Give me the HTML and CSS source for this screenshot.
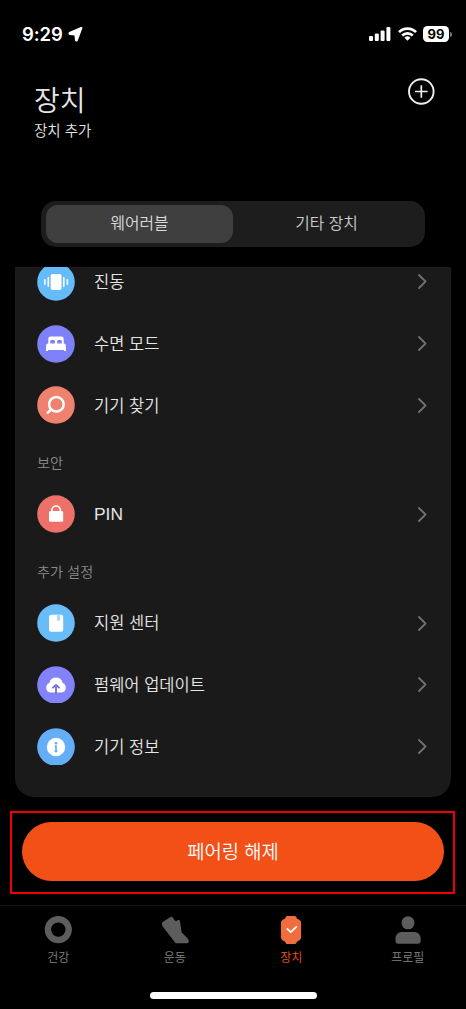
FILE: index.html
```html
<!DOCTYPE html>
<html lang="ko">
<head>
<meta charset="utf-8">
<title>장치</title>
<link rel="stylesheet" href="styles.css">
</head>
<body>
<div class="screen">
  <div class="status">
    <span class="time">9:29</span>
    <svg class="locate" width="15" height="16" viewBox="0 0 15 16"><path d="M13.200 1.600 1.500 6.800q-.7 1 .2 1.400l5.400.6.700 5.500q.5.900 1.200.1L13.700 2.100z" fill="#fff" stroke="#fff" stroke-width="1.500" stroke-linejoin="round"/></svg>
    <svg class="signal" width="22" height="14" viewBox="0 0 22 14" fill="#fff"><rect x="0" y="9" width="4" height="5" rx="1.1"/><rect x="5.8" y="6.5" width="4" height="7.5" rx="1.1"/><rect x="11.6" y="3.5" width="4" height="10.5" rx="1.1"/><rect x="17.4" y="0" width="4" height="14" rx="1.1"/></svg>
    <svg class="wifi" width="19" height="14" viewBox="0 0 19 14"><g fill="none" stroke="#fff" stroke-width="2.700"><path d="M1 5.100a12 12 0 0 1 17 0"/><path d="M4.200 8.500a7.600 7.600 0 0 1 10.600 0"/></g><path d="M6.500 10.800a4.300 4.300 0 0 1 6 0L9.500 13.700z" fill="#fff"/></svg>
    <span class="battery">99</span><span class="battery-tip"></span>
  </div>

  <header class="header">
    <div>
      <h1 class="title">장치</h1>
      <p class="subtitle">장치 추가</p>
    </div>
    <svg class="add" width="28" height="28" viewBox="0 0 28 28" fill="none" stroke="#eee" stroke-width="1.900"><circle cx="14.300" cy="13.500" r="12.300"/><path d="M14.300 7.200v12.600M8 13.500h12.600" stroke-width="1.700"/></svg>
  </header>

  <div class="tabs">
    <div class="tab tab-on">웨어러블</div>
    <div class="tab">기타 장치</div>
  </div>

  <main class="card">
    <div class="list">
      <div class="row">
        <svg class="icon" viewBox="0 0 38 38"><circle cx="19" cy="19" r="18.800" fill="#66bbfa"/><rect x="13.700" y="11" width="10.800" height="16" rx="1.800" fill="#fff"/><path d="M11.300 14.800v8.500M26.800 14.800v8.500M7.800 16.800v4.500M30.400 16.800v4.500" stroke="#fff" stroke-width="1.600" stroke-linecap="round"/></svg>
        <span class="name">진동</span><svg class="chev" viewBox="0 0 9 15"><path d="m1 1 6.500 6.500L1 14"/></svg>
      </div>
      <div class="row">
        <svg class="icon" viewBox="0 0 38 38"><circle cx="19" cy="19" r="18.800" fill="#7e80f7"/><path d="M11.300 18.500v-4.700a2.200 2.200 0 0 1 2.200-2.200h11a2.200 2.200 0 0 1 2.200 2.200v4.700a2.200 2.200 0 0 1 2.200 2.200V26h-2v-1H11v1H9v-5.300a2.200 2.200 0 0 1 2.300-2.200z" fill="#fff"/><path d="M13.300 18.400v-2c0-.9.6-1.400 1.400-1.400h1.800c.9 0 1.400.5 1.400 1.400v2zM20.200 18.400v-2c0-.9.6-1.400 1.400-1.400h1.800c.9 0 1.400.5 1.400 1.400v2z" fill="#7e80f7"/></svg>
        <span class="name">수면 모드</span><svg class="chev" viewBox="0 0 9 15"><path d="m1 1 6.500 6.500L1 14"/></svg>
      </div>
      <div class="row">
        <svg class="icon" viewBox="0 0 38 38"><circle cx="19" cy="19" r="18.800" fill="#ef826e"/><g fill="none" stroke="#fff" stroke-width="2.500" stroke-linecap="round"><circle cx="19.400" cy="18.300" r="7.300"/><path d="m14.200 23.500-3.600 3.200"/></g></svg>
        <span class="name">기기 찾기</span><svg class="chev" viewBox="0 0 9 15"><path d="m1 1 6.500 6.500L1 14"/></svg>
      </div>
      <h2 class="section">보안</h2>
      <div class="row">
        <svg class="icon" viewBox="0 0 38 38"><circle cx="19" cy="19" r="18.800" fill="#ed7168"/><rect x="12" y="16" width="14.200" height="10.800" rx="1.600" fill="#fff"/><path d="M14.900 17v-1.800a4.200 4.200 0 0 1 8.400 0V17" fill="none" stroke="#fff" stroke-width="1.700"/></svg>
        <span class="name latin">PIN</span><svg class="chev" viewBox="0 0 9 15"><path d="m1 1 6.500 6.500L1 14"/></svg>
      </div>
      <h2 class="section">추가 설정</h2>
      <div class="row">
        <svg class="icon" viewBox="0 0 38 38"><circle cx="19" cy="19" r="18.800" fill="#68bdf9"/><rect x="12" y="10.700" width="14.200" height="17" rx="2.200" fill="#fff"/><path d="M20 10.700h3.200v6.600l-1.600-1.100-1.600 1.100z" fill="#a9d9fb"/></svg>
        <span class="name">지원 센터</span><svg class="chev" viewBox="0 0 9 15"><path d="m1 1 6.500 6.500L1 14"/></svg>
      </div>
      <div class="row">
        <svg class="icon" viewBox="0 0 38 38"><path d="M13.500 37a18.800 18.800 0 1 1 11 0z" fill="#8283f8"/><path d="M13.300 26.500a4.900 4.900 0 0 1-.9-9.400 6.700 6.700 0 0 1 13.200 0 4.900 4.900 0 0 1-.9 9.400z" fill="#fff"/><path d="M19 27v-7M16 21.600l3-2.700 3 2.700" fill="none" stroke="#7475df" stroke-width="1.900" stroke-linecap="round" stroke-linejoin="round"/></svg>
        <span class="name">펌웨어 업데이트</span><svg class="chev" viewBox="0 0 9 15"><path d="m1 1 6.500 6.500L1 14"/></svg>
      </div>
      <div class="row">
        <svg class="icon" viewBox="0 0 38 38"><path d="M13.500 37a18.800 18.800 0 1 1 11 0z" fill="#64aef8"/><circle cx="19" cy="19" r="9.200" fill="#fff"/><circle cx="19" cy="15.300" r="1.300" fill="#64aef8"/><path d="M17.700 18.200H19v5.100M17.600 23.400h2.800" stroke="#64aef8" stroke-width="1.700" fill="none"/></svg>
        <span class="name">기기 정보</span><svg class="chev" viewBox="0 0 9 15"><path d="m1 1 6.500 6.500L1 14"/></svg>
      </div>
    </div>
  </main>

  <div class="highlight"><div class="unpair">페어링 해제</div></div>

  <nav class="nav">
    <div class="item"><svg width="28" height="28" viewBox="0 0 28 28"><circle cx="14.300" cy="13.600" r="10.400" fill="none" stroke="#5d5d5d" stroke-width="6.400"/></svg><span>건강</span></div>
    <div class="item"><svg width="28" height="28" viewBox="0 0 28 28"><path d="M2.300 5.400 9.500 1.100Q10.700.4 11.700 1.400l2.200 3 1.100.8 2.100-1.200q1.500-.4 1.800 1.100l1.800 11.400 6 6q1.200 1.200 1 3.200-.2 1.600-1.700 1.600H15.800q-1.100 0-1.800-.9L1.600 10.200Q-.2 7.100 2.300 5.400z" fill="#5d5d5d"/></svg><span>운동</span></div>
    <div class="item item-on"><svg width="28" height="28" viewBox="0 0 28 28"><path d="M10.500 0h7q1.200 0 1.800 1.100l.8 1.700q4 1.200 4 4.200v14q0 3-4 4.500l-.8 1.500q-.6 1.100-1.800 1.100h-7q-1.200 0-1.800-1.100l-.8-1.500q-4-1.500-4-4.500V7q0-3 4-4.200l.8-1.700Q9.300 0 10.500 0z" fill="#f06d40"/><path d="m10.300 12.900 3.400 3.200 5.600-5.200" fill="none" stroke="#fff" stroke-width="1.800" stroke-linecap="round" stroke-linejoin="round"/></svg><span>장치</span></div>
    <div class="item"><svg width="28" height="28" viewBox="0 0 28 28" fill="#5d5d5d"><circle cx="14" cy="6.800" r="6.500"/><path d="M1.500 23c0-4.300 2.500-7 7-7h11.200c4.500 0 7 2.700 7 7v1.800q0 2.900-2.800 2.900H4.300q-2.800 0-2.800-2.900z"/></svg><span>프로필</span></div>
  </nav>
  <div class="home"></div>
</div>
</body>
</html>
```

FILE: styles.css
```css
* { box-sizing: border-box; }
body {
  margin: 0;
  background: #000;
  color: #e6e6e6;
  font-family: "Noto Sans CJK KR", sans-serif;
  font-weight: 350;
}
.screen {
  width: 466px;
  height: 1009px;
  display: flex;
  flex-direction: column;
  overflow: hidden;
}
h1, h2, p { margin: 0; font-weight: 350; }

.status {
  height: 68px;
  flex: none;
  display: flex;
  align-items: center;
  padding: 0 14px 0 22px;
}
.time {
  font: 600 18.5px/20px Inter, sans-serif;
  letter-spacing: -.1px;
  color: #fff;
}
.locate { margin-left: 5px; }
.signal { margin-left: auto; }
.wifi { margin-left: 7px; }
.battery {
  width: 26px;
  height: 16px;
  margin-left: 6px;
  border-radius: 4.5px;
  background: #fff;
  color: #000;
  font: 700 13px/16px Inter, sans-serif;
  text-align: center;
}
.battery-tip {
  width: 2px;
  height: 5px;
  margin-left: 1px;
  border-radius: 0 2px 2px 0;
  background: #777;
}

.header {
  height: 133px;
  flex: none;
  display: flex;
  justify-content: space-between;
  padding: 10px 31px 0 34px;
}
.title { font-size: 28px; line-height: 42px; }
.subtitle { font-size: 14.5px; line-height: 20px; }

.tabs {
  flex: none;
  display: flex;
  width: 384px;
  height: 46px;
  margin-left: 41px;
  padding: 4px 5px;
  border-radius: 15px;
  background: #1d1d1d;
}
.tab {
  flex: 1;
  border-radius: 12px;
  font-size: 15.8px;
  line-height: 35px;
  text-align: center;
  color: #ccc;
}
.tab-on { background: #3f3f3f; color: #dcdcdc; }

.card {
  flex: none;
  height: 530px;
  margin: 20px 15px 0;
  border-radius: 0 0 19px 19px;
  background: #1a1a1a;
  overflow: hidden;
}
.list { margin-top: -16px; }
.row {
  display: flex;
  align-items: center;
  height: 61.8px;
  padding: 0 24px 0 22px;
}
.icon { width: 38px; height: 38px; }
.name {
  flex: 1;
  margin-left: 19px;
  padding-bottom: 1.4px;
  font-size: 16.5px;
  line-height: 24px;
}
.latin {
  padding-bottom: 0;
  font-family: "Liberation Sans", sans-serif;
  font-size: 17.4px;
  line-height: 25px;
}
.chev {
  width: 9px;
  height: 15px;
  fill: none;
  stroke: #707070;
  stroke-width: 1.8;
  stroke-linecap: round;
  stroke-linejoin: round;
}
.section {
  height: 47px;
  padding: 16px 0 0 22px;
  font-size: 14.2px;
  line-height: 20px;
  color: #8a8a8a;
}

.highlight {
  flex: none;
  width: 445px;
  height: 83px;
  margin: 13.5px 0 0 10px;
  padding: 9px 9px 9px 10px;
  border: 2px solid #f00000;
}
.unpair {
  height: 59.500px;
  border-radius: 30px;
  background: #f35018;
  color: #fff;
  font-size: 18.8px;
  line-height: 57px;
  text-align: center;
}

.nav {
  flex: none;
  display: flex;
  height: 88px;
  margin-top: 11.5px;
  padding-top: 10px;
  border-top: 1px solid #171717;
}
.item {
  flex: 1;
  display: flex;
  flex-direction: column;
  align-items: center;
  gap: 4px;
  font-size: 12px;
  line-height: 18px;
  color: #808080;
}
.item-on { color: #f35018; }
.home {
  flex: none;
  width: 167px;
  height: 7px;
  margin: -1px auto 0;
  border-radius: 4px;
  background: #fff;
}
```
